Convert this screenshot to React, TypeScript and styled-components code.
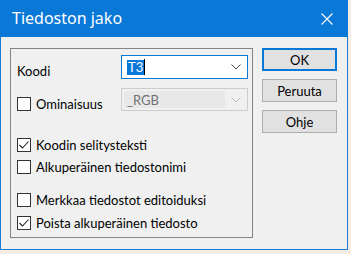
import React from "react";
import styled, { createGlobalStyle } from "styled-components";

const Global = createGlobalStyle`
  html, body { margin: 0; padding: 0; background: #f5ece3; }
  body { font-family: Lato, "Noto Sans", sans-serif; }
`;

const Window = styled.div`
  width: 348px;
  height: 250px;
  box-sizing: border-box;
  border: 1px solid #1a7fd6;
  border-top: none;
  background: #f0f0f0;
  display: flex;
  flex-direction: column;
`;

const TitleBar = styled.div`
  height: 37px;
  margin: 0 -1px;
  background: #0a78d7;
  color: #fff;
  display: flex;
  align-items: center;
  justify-content: space-between;
  padding: 0 15px 0 12px;
  font-size: 16px;
  font-family: "Noto Sans", sans-serif;
  flex-shrink: 0;
`;

const Title = styled.span`
  padding-bottom: 2px;
`;

const Body = styled.div`
  display: flex;
  padding: 11px 0 0 9px;
  gap: 9px;
  font-family: Lato, "Noto Sans", sans-serif;
  font-size: 13px;
  color: #000;
`;

const GroupBox = styled.div`
  width: 243px;
  height: 190px;
  box-sizing: border-box;
  border: 1px solid #848484;
  display: flex;
  flex-direction: column;
  padding: 6px 4px 0 6px;
`;

const FieldRow = styled.div<{ $mt?: number }>`
  display: flex;
  justify-content: space-between;
  align-items: flex-end;
  margin-top: ${(p) => p.$mt ?? 0}px;
`;

const Label = styled.span`
  white-space: nowrap;
  line-height: 16px;
`;

const Combo = styled.div<{ $disabled?: boolean; $h: number }>`
  width: 127px;
  height: ${(p) => p.$h}px;
  box-sizing: border-box;
  border: 1px solid ${(p) => (p.$disabled ? "#cccccc" : "#0a78d7")};
  background: ${(p) => (p.$disabled ? "#f0f0f0" : "#ffffff")};
  display: flex;
  align-items: stretch;
  padding: 2px;
`;

const ComboField = styled.div<{ $disabled?: boolean }>`
  flex: 1;
  display: flex;
  align-items: center;
  padding-left: 3px;
  background: ${(p) => (p.$disabled ? "#e8e8e8" : "transparent")};
  color: ${(p) => (p.$disabled ? "#707070" : "#000")};
  margin-right: ${(p) => (p.$disabled ? 6 : 0)}px;
`;

const Selected = styled.span`
  background: #0a78d7;
  color: #fff;
  line-height: 15px;
  padding: 0 1px;
`;

const Caret = styled.span`
  width: 1px;
  height: 16px;
  background: #000;
`;

const Checks = styled.div`
  display: flex;
  flex-direction: column;
`;

const CheckRow = styled.label<{ $mt: number }>`
  display: flex;
  align-items: center;
  gap: 5px;
  margin-top: ${(p) => p.$mt}px;
  height: 14px;
  white-space: nowrap;
  line-height: 14px;
`;

const Box = styled.span`
  width: 14px;
  height: 14px;
  box-sizing: border-box;
  border: 1px solid #333333;
  background: #fff;
  display: flex;
  align-items: center;
  justify-content: center;
  flex-shrink: 0;
`;

const ButtonColumn = styled.div`
  display: flex;
  flex-direction: column;
  gap: 8px;
`;

const Button = styled.div<{ $default?: boolean }>`
  width: 75px;
  height: 23px;
  box-sizing: border-box;
  border: ${(p) => (p.$default ? "2px solid #0a78d7" : "1px solid #adadad")};
  background: #e1e1e1;
  display: flex;
  align-items: center;
  justify-content: center;
  line-height: 14px;
`;

const DownIcon = styled.svg`
  align-self: center;
  margin-right: 4px;
  flex-shrink: 0;
`;

const CheckBox = ({ checked }: { checked?: boolean }) => (
  <Box>
    {checked && (
      <svg width="12" height="12" viewBox="0 0 12 12">
        <path d="M1.5 6 L4.5 9 L10.5 2.5" fill="none" stroke="#222" strokeWidth="1.1" />
      </svg>
    )}
  </Box>
);

const Down = ({ color }: { color: string }) => (
  <DownIcon width="10" height="6" viewBox="0 0 10 6">
    <path d="M0.5 0.5 L5 5 L9.5 0.5" fill="none" stroke={color} strokeWidth="1" />
  </DownIcon>
);

export default function App() {
  return (
    <>
      <Global />
      <Window>
        <TitleBar>
          <Title>Tiedoston jako</Title>
          <svg width="12" height="12" viewBox="0 0 12 12">
            <path d="M0.5 0.5 L11.5 11.5 M11.5 0.5 L0.5 11.5" stroke="#fff" strokeWidth="1.1" />
          </svg>
        </TitleBar>
        <Body>
          <GroupBox>
            <FieldRow>
              <Label>Koodi</Label>
              <Combo $h={24}>
                <ComboField>
                  <Selected>T3</Selected>
                  <Caret />
                </ComboField>
                <Down color="#444" />
              </Combo>
            </FieldRow>
            <FieldRow $mt={9}>
              <CheckRow $mt={0}>
                <CheckBox />
                Ominaisuus
              </CheckRow>
              <Combo $h={23} $disabled>
                <ComboField $disabled>_RGB</ComboField>
                <Down color="#b8b8b8" />
              </Combo>
            </FieldRow>
            <Checks>
              <CheckRow $mt={27}>
                <CheckBox checked />
                Koodin selitysteksti
              </CheckRow>
              <CheckRow $mt={8}>
                <CheckBox />
                Alkuperäinen tiedostonimi
              </CheckRow>
              <CheckRow $mt={19}>
                <CheckBox />
                Merkkaa tiedostot editoiduksi
              </CheckRow>
              <CheckRow $mt={9}>
                <CheckBox checked />
                Poista alkuperäinen tiedosto
              </CheckRow>
            </Checks>
          </GroupBox>
          <ButtonColumn>
            <Button $default>OK</Button>
            <Button>Peruuta</Button>
            <Button>Ohje</Button>
          </ButtonColumn>
        </Body>
      </Window>
    </>
  );
}
